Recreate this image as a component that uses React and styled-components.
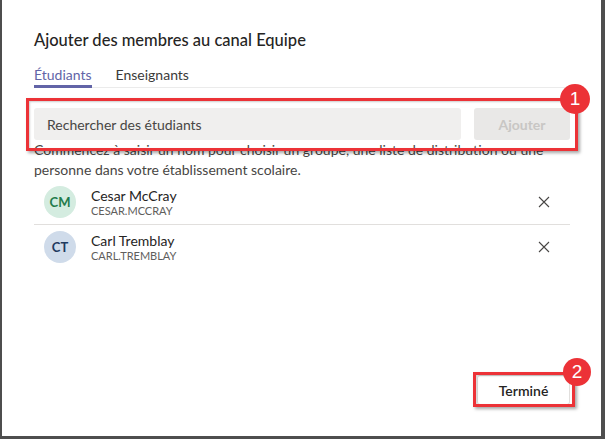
import React from "react";
import styled, { createGlobalStyle } from "styled-components";

const Global = createGlobalStyle`
  html, body { margin: 0; padding: 0; background: #fff; }
  body { font-family: "Segoe UI", Lato, "Noto Sans", sans-serif; color: #252423; }
  * { box-sizing: border-box; }
`;

const Frame = styled.div`
  width: 605px;
  height: 439px;
  border-left: 2px solid #4e4e4e;
  border-right: 4px solid #4e4e4e;
  border-bottom: 3px solid #4e4e4e;
  background: #fff;
  display: flex;
  flex-direction: column;
  padding: 28px 31px 0 32px;
`;

const Title = styled.h1`
  margin: 0;
  font-size: 16.5px;
  font-weight: 500;
  line-height: 24px;
  color: #252423;
`;

const Tabs = styled.div`
  display: flex;
  gap: 24px;
  margin-top: 13px;
  border-bottom: 1px solid #ebebeb;
`;

const Tab = styled.div`
  font-size: 14px;
  line-height: 20px;
  color: ${(p) => (p.$active ? "#6264a7" : "#3b3a39")};
  border-bottom: 3px solid ${(p) => (p.$active ? "#6264a7" : "transparent")};
  margin-bottom: -1px;
`;

const SearchRow = styled.div`
  position: relative;
  display: flex;
  gap: 13px;
  margin-top: 20px;
  height: 32px;
`;

const SearchInput = styled.div`
  flex: 1;
  background: #f0efee;
  border-radius: 3px;
  display: flex;
  align-items: center;
  padding-left: 13px;
  font-size: 14px;
  color: #484644;
`;

const AddButton = styled.div`
  width: 96px;
  background: #e9e8e7;
  border-radius: 3px;
  display: flex;
  align-items: center;
  justify-content: center;
  font-size: 14px;
  font-weight: 700;
  color: #c8c6c4;
`;

const Helper = styled.p`
  margin: 0;
  font-size: 14px;
  line-height: 20px;
  color: #484644;
  padding-right: 6px;
`;

const List = styled.div`
  display: flex;
  flex-direction: column;
`;

const Member = styled.div`
  display: flex;
  align-items: center;
  height: 45px;
  padding-left: 10px;
  border-bottom: 1px solid ${(p) => (p.$last ? "transparent" : "#e1dfdd")};
`;

const Avatar = styled.div`
  width: 32px;
  height: 32px;
  border-radius: 50%;
  background: ${(p) => p.$bg};
  color: ${(p) => p.$fg};
  font-size: 13px;
  font-weight: 700;
  display: flex;
  align-items: center;
  justify-content: center;
  flex-shrink: 0;
`;

const Info = styled.div`
  margin-left: 15px;
  flex: 1;
  display: flex;
  flex-direction: column;
`;

const Name = styled.div`
  font-size: 14px;
  line-height: 17px;
  color: #252423;
`;

const Login = styled.div`
  font-size: 11px;
  line-height: 14px;
  color: #605e5c;
`;

const Remove = styled.div`
  width: 14px;
  height: 14px;
  margin-right: 19px;
  display: flex;
  align-items: center;
  justify-content: center;
`;

const Footer = styled.div`
  margin-top: auto;
  margin-bottom: 31px;
  display: flex;
  justify-content: flex-end;
`;

const DoneWrap = styled.div`
  position: relative;
`;

const DoneButton = styled.div`
  width: 93px;
  height: 30px;
  border: 1px solid #e1dfdd;
  border-radius: 3px;
  background: #fff;
  display: flex;
  align-items: center;
  justify-content: center;
  font-size: 14px;
  font-weight: 600;
  color: #252423;
`;

const Highlight = styled.div`
  position: absolute;
  top: ${(p) => p.$t}px;
  left: ${(p) => p.$l}px;
  right: ${(p) => p.$r}px;
  bottom: ${(p) => p.$b}px;
  border: 3px solid #ec3237;
  box-shadow: 2px 2px 3px rgba(0, 0, 0, 0.35), inset 1px 1px 2px rgba(0, 0, 0, 0.2);
  pointer-events: none;
`;

const Badge = styled.div`
  position: absolute;
  width: ${(p) => p.$s}px;
  height: ${(p) => p.$s}px;
  top: ${(p) => p.$t}px;
  right: ${(p) => p.$r}px;
  border-radius: 50%;
  background: #ec3237;
  color: #fff;
  font-family: "Liberation Sans", Arial, sans-serif;
  font-size: 19px;
  display: flex;
  align-items: center;
  justify-content: center;
`;

const CloseIcon = () => (
  <svg width="12" height="12" viewBox="0 0 12 12">
    <path d="M1 1 L11 11 M11 1 L1 11" stroke="#484644" strokeWidth="1.1" fill="none" />
  </svg>
);

const members = [
  { initials: "CM", name: "Cesar McCray", login: "CESAR.MCCRAY", bg: "#d4ece0", fg: "#237b4b" },
  { initials: "CT", name: "Carl Tremblay", login: "CARL.TREMBLAY", bg: "#cfdbea", fg: "#1f3a5f" },
];

export default function App() {
  return (
    <>
      <Global />
      <Frame>
        <Title>Ajouter des membres au canal Equipe</Title>
        <Tabs>
          <Tab $active>Étudiants</Tab>
          <Tab>Enseignants</Tab>
        </Tabs>
        <SearchRow>
          <SearchInput>Rechercher des étudiants</SearchInput>
          <AddButton>Ajouter</AddButton>
          <Highlight $t={-10} $l={-8} $r={-8} $b={-11} />
          <Badge $s={30} $t={-24} $r={-20}>1</Badge>
        </SearchRow>
        <Helper>
          Commencez à saisir un nom pour choisir un groupe, une liste de distribution ou une
          personne dans votre établissement scolaire.
        </Helper>
        <List>
          {members.map((m, i) => (
            <Member key={m.login} $last={i === members.length - 1}>
              <Avatar $bg={m.bg} $fg={m.fg}>{m.initials}</Avatar>
              <Info>
                <Name>{m.name}</Name>
                <Login>{m.login}</Login>
              </Info>
              <Remove>
                <CloseIcon />
              </Remove>
            </Member>
          ))}
        </List>
        <Footer>
          <DoneWrap>
            <DoneButton>Terminé</DoneButton>
            <Highlight $t={-3} $l={-4} $r={-5} $b={-2} />
            <Badge $s={28} $t={-17} $r={-21}>2</Badge>
          </DoneWrap>
        </Footer>
      </Frame>
    </>
  );
}
